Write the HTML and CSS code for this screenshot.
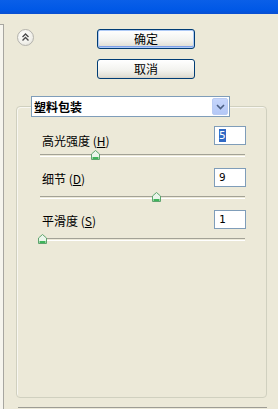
FILE: index.html
```html
<!DOCTYPE html>
<html>
<head>
<meta charset="utf-8">
<link rel="stylesheet" href="styles.css">
</head>
<body>
<div class="titlebar"></div>
<div class="main">
  <div class="leftstrip"></div>
  <div class="content">
    <div class="top">
      <div class="roundbtn">
        <svg width="17" height="17" viewBox="0 0 17 17"><path d="M5.5 8 L8.5 5 L11.5 8 M5.5 11.5 L8.5 8.5 L11.5 11.5" fill="none" stroke="#4a4a4a" stroke-width="1.4"/></svg>
      </div>
      <div class="btncol">
        <button class="btn default">确定</button>
        <button class="btn">取消</button>
      </div>
    </div>
    <div class="group">
      <div class="select">
        <span class="select-text">塑料包装</span>
        <span class="select-btn"><svg width="9" height="6" viewBox="0 0 9 6"><path d="M1 1 L4.5 4.5 L8 1" fill="none" stroke="#4d6185" stroke-width="1.6"/></svg></span>
      </div>
      <div class="param">
        <div class="row">
          <span class="label low">高光强度 (<u>H</u>)</span>
          <span class="input"><span class="sel">5</span></span>
        </div>
        <div class="slider"><span class="track"></span><span class="thumb" style="left:51px"><svg width="9" height="10" viewBox="0 0 9 10"><path d="M4.5 0.5 L8.5 4 V9.5 H0.5 V4 Z" fill="#eaf5ea" stroke="#5fa46f"/><path d="M1.5 7 H7.5 V9 H1.5 Z" fill="#3fb45a"/></svg></span></div>
      </div>
      <div class="param">
        <div class="row">
          <span class="label">细节 (<u>D</u>)</span>
          <span class="input">9</span>
        </div>
        <div class="slider"><span class="track"></span><span class="thumb" style="left:112px"><svg width="9" height="10" viewBox="0 0 9 10"><path d="M4.5 0.5 L8.5 4 V9.5 H0.5 V4 Z" fill="#eaf5ea" stroke="#5fa46f"/><path d="M1.5 7 H7.5 V9 H1.5 Z" fill="#3fb45a"/></svg></span></div>
      </div>
      <div class="param">
        <div class="row">
          <span class="label">平滑度 (<u>S</u>)</span>
          <span class="input">1</span>
        </div>
        <div class="slider"><span class="track"></span><span class="thumb" style="left:-2px"><svg width="9" height="10" viewBox="0 0 9 10"><path d="M4.5 0.5 L8.5 4 V9.5 H0.5 V4 Z" fill="#eaf5ea" stroke="#5fa46f"/><path d="M1.5 7 H7.5 V9 H1.5 Z" fill="#3fb45a"/></svg></span></div>
      </div>
    </div>
    <div class="bottomline"></div>
  </div>
</div>
</body>
</html>
```

FILE: styles.css
```css
html, body {
  margin: 0;
  padding: 0;
  background: #ece9d8;
  width: 278px;
  height: 409px;
  overflow: hidden;
  font-family: "Noto Sans CJK SC", "Noto Sans", sans-serif;
  font-size: 12px;
  color: #000;
}

.titlebar {
  height: 14px;
  background: linear-gradient(#0a5fe8, #0058e6 70%, #0a4fd0);
}

.main {
  display: flex;
  height: 395px;
}

.leftstrip {
  width: 3px;
  margin-top: 10px;
  background: #f6f5ee;
  border-top: 1px solid #a7a6a0;
  border-right: 1px solid #a7a6a0;
}

.content {
  flex: 1;
  display: flex;
  flex-direction: column;
}

.top {
  display: flex;
  padding-top: 15px;
}

.roundbtn {
  width: 17px;
  height: 17px;
  margin: 0 0 0 13px;
  border-radius: 50%;
  box-sizing: border-box;
  border: 1px solid #b4b3ad;
  background: radial-gradient(circle at 40% 35%, #ffffff, #f1f0ea 60%, #d9d8d0);
  display: flex;
  align-items: center;
  justify-content: center;
}

.roundbtn svg {
  flex: none;
}

.btncol {
  display: flex;
  flex-direction: column;
  gap: 10px;
  margin-left: 63px;
}

.btn {
  width: 98px;
  height: 20px;
  box-sizing: border-box;
  border: 1px solid #003c74;
  border-radius: 3px;
  background: linear-gradient(#ffffff, #f3f3ef 55%, #e2e0d6 90%, #d6d0c5);
  font-family: "Noto Sans CJK SC", sans-serif;
  font-size: 12px;
  line-height: 16px;
  padding: 0;
  color: #000;
}

.btn.default {
  box-shadow: inset 0 0 0 1px #aecaf6, inset 0 -1px 0 1px #7ea0e8;
}

.group {
  margin: 27px 0 0 12px;
  width: 251px;
  height: 292px;
  box-sizing: border-box;
  border: 1px solid #d0d0bf;
  border-radius: 4px;
  box-shadow: inset 1px 1px 0 #f8f7f1;
}

.select {
  margin: -11px 0 0 14px;
  width: 199px;
  height: 21px;
  box-sizing: border-box;
  border: 1px solid #7f9db9;
  background: #fff;
  display: flex;
  align-items: center;
  justify-content: space-between;
  padding: 0 1px 0 2px;
}

.select-text {
  font-weight: 600;
  line-height: 14px;
}

.select-btn {
  width: 16px;
  height: 17px;
  box-sizing: border-box;
  border: 1px solid #b9cbf3;
  border-radius: 2px;
  background: linear-gradient(#c6d6fc, #b4c8f6);
  display: flex;
  align-items: center;
  justify-content: center;
}

.param {
  margin-top: 9px;
  padding-left: 23px;
  width: 205px;
}

.param + .param {
  margin-top: 8px;
}

.row {
  display: flex;
  justify-content: space-between;
  align-items: flex-start;
  height: 19px;
  padding-left: 2px;
  margin-right: -1px;
}

.label {
  line-height: 14px;
  margin-top: 4px;
}

.label.low {
  margin-top: 8px;
}

.label u {
  text-decoration: underline;
  text-underline-offset: 1px;
}

.input {
  width: 32px;
  height: 19px;
  box-sizing: border-box;
  border: 1px solid #7f9db9;
  background: #fff;
  font-family: "DejaVu Sans Mono", monospace;
  font-size: 11px;
  line-height: 15px;
  padding: 1px 0 0 4px;
}

.sel {
  background: #316ac5;
  color: #fff;
}

.slider {
  position: relative;
  height: 10px;
  margin-top: 5px;
}

.track {
  display: block;
  position: absolute;
  left: 0;
  right: 0;
  top: 4px;
  height: 1px;
  border-top: 1px solid #a3a296;
  border-bottom: 1px solid #ffffff;
}

.thumb {
  position: absolute;
  top: 0;
  width: 9px;
  height: 10px;
  display: block;
}

.thumb svg {
  display: block;
}

.bottomline {
  margin: 9px 0 0 14px;
  width: 249px;
  height: 1px;
  background: #9d9c94;
}
```
